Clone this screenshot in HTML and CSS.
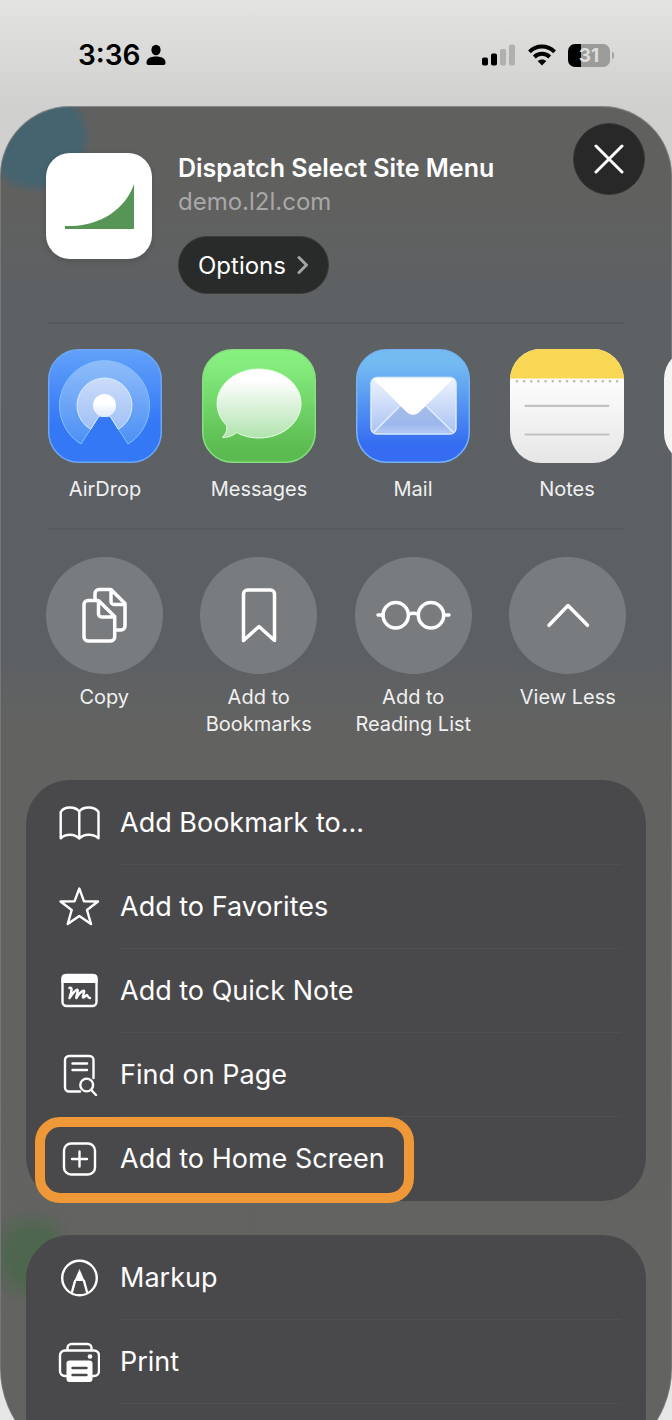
FILE: index.html
```html
<!DOCTYPE html>
<html lang="en">
<head>
    <meta charset="UTF-8">
    <meta name="viewport" content="width=device-width, initial-scale=1.0">
    <title>Dispatch Select Site Menu</title>
    <link rel="stylesheet" href="styles.css">
</head>
<body>
    <header class="status-bar">
        <span class="time">3:36</span>
        <svg class="person" width="20" height="22" viewBox="0 0 20 22">
            <ellipse cx="10" cy="6" rx="4.600" ry="5.200"/>
            <path d="M0.500 18.500C0.500 14.500 4.500 12.500 10 12.500S19.500 14.500 19.500 18.500C19.500 20.300 18.800 21 17.500 21H2.500C1.200 21 0.500 20.300 0.500 18.500Z"/>
        </svg>
        <svg class="signal" width="34" height="22" viewBox="0 0 34 22">
            <rect x="0" y="13.500" width="6" height="8" rx="1.800"/>
            <rect x="9" y="9.500" width="6" height="12" rx="1.800"/>
            <rect class="dim" x="18" y="5" width="6" height="16.500" rx="1.800"/>
            <rect class="dim" x="27" y="0.500" width="6" height="21" rx="1.800"/>
        </svg>
        <svg class="wifi" width="30" height="22" viewBox="0 0 30 22">
            <path class="wave" d="M2.500 7.800C9.500 0.800 20.500 0.800 27.500 7.800"/>
            <path class="wave" d="M7.300 13C11.600 8.800 18.400 8.800 22.700 13"/>
            <path d="M15 21.500L10.600 17C13 14.900 17 14.900 19.400 17Z"/>
        </svg>
        <div class="battery"><span class="battery-level">31</span></div>
    </header>

    <main class="sheet">
        <div class="page-info">
            <svg class="site-icon" width="106" height="106" viewBox="0 0 106 106">
                <path d="M19 73H26C54 72 79 57 88 31V76H19Z"/>
            </svg>
            <div class="page-text">
                <h1>Dispatch Select Site Menu</h1>
                <p>demo.l2l.com</p>
                <button class="options" type="button">Options
                    <svg width="12" height="20" viewBox="0 0 12 20"><path d="M2 2.500L9.500 10L2 17.500"/></svg>
                </button>
            </div>
            <button class="close" type="button" aria-label="Close">
                <svg width="30" height="30" viewBox="0 0 30 30"><path d="M2 2L28 28M28 2L2 28"/></svg>
            </button>
        </div>

        <hr>

        <div class="apps">
            <button class="app" type="button">
                <svg width="114" height="114" viewBox="0 0 114 114">
                    <defs>
                        <linearGradient id="airdrop" x2="0" y2="1"><stop offset="0" stop-color="#62a1fa"/><stop offset=".65" stop-color="#3478f6"/><stop offset="1" stop-color="#3478f6"/></linearGradient>
                        <linearGradient id="wave-outer" x2="0" y2="1"><stop offset="0" stop-color="#8fbdf9"/><stop offset="1" stop-color="#4c8ff5"/></linearGradient>
                        <linearGradient id="wave-inner" x2="0" y2="1"><stop offset="0" stop-color="#ccdcfa"/><stop offset="1" stop-color="#9fc0f6"/></linearGradient>
                        <linearGradient id="wave-dot" x2="0" y2="1"><stop offset=".4" stop-color="#fff"/><stop offset="1" stop-color="#dce8fd"/></linearGradient>
                    </defs>
                    <rect x=".75" y=".75" width="112.500" height="112.500" rx="30" fill="url(#airdrop)" stroke="#6ba6f9" stroke-width="1.500"/>
                    <path d="M33 95A45 45 0 1 1 80 95L62 67H51Z" fill="url(#wave-outer)" stroke="#86c0fb" stroke-linejoin="round"/>
                    <path d="M42.700 80.300A27.500 27.500 0 1 1 70.300 80.300L62 67H51Z" fill="url(#wave-inner)" stroke="#d5edff" stroke-linejoin="round"/>
                    <circle cx="56.500" cy="56.500" r="11.500" fill="url(#wave-dot)"/>
                </svg>
                <span>AirDrop</span>
            </button>
            <button class="app" type="button">
                <svg width="114" height="114" viewBox="0 0 114 114">
                    <defs>
                        <linearGradient id="messages" x2="0" y2="1"><stop offset="0" stop-color="#87f180"/><stop offset=".15" stop-color="#84eb7d"/><stop offset=".9" stop-color="#5bba50"/></linearGradient>
                        <linearGradient id="bubble" x2="0" y2="1"><stop offset=".15" stop-color="#fff"/><stop offset="1" stop-color="#b1e3ae"/></linearGradient>
                    </defs>
                    <rect x=".75" y=".75" width="112.500" height="112.500" rx="30" fill="url(#messages)" stroke="#86e080" stroke-width="1.500"/>
                    <path d="M34.500 83.600A42 34.500 0 1 0 24.500 76.300C25.500 81 24 85 20.500 88C20 89.200 29 88.500 34.500 83.600Z" fill="url(#bubble)" stroke="#e6ffe4"/>
                </svg>
                <span>Messages</span>
            </button>
            <button class="app" type="button">
                <svg width="114" height="114" viewBox="0 0 114 114">
                    <defs>
                        <linearGradient id="mail" x2="0" y2="1"><stop offset=".12" stop-color="#74bbf2"/><stop offset=".85" stop-color="#356cf1"/></linearGradient>
                        <linearGradient id="envelope" x2="0" y2="1"><stop offset="0" stop-color="#eef4fe"/><stop offset="1" stop-color="#a9c2f2"/></linearGradient>
                        <linearGradient id="envelope-front" x2="0" y2="1"><stop offset="0" stop-color="#a5bdea"/><stop offset=".7" stop-color="#9cb7ec"/><stop offset="1" stop-color="#b3c8f3"/></linearGradient>
                    </defs>
                    <rect x=".75" y=".75" width="112.500" height="112.500" rx="30" fill="url(#mail)" stroke="#75b3f6" stroke-width="1.500"/>
                    <rect x="15" y="28.500" width="85" height="56.500" rx="6" fill="url(#envelope)"/>
                    <path d="M18 83L43 58H71L97 83Z" fill="url(#envelope-front)"/>
                    <path d="M18 83L43 58M97 83L71 58" fill="none" stroke="#e2efff" stroke-width="1.500"/>
                    <path d="M17.500 30Q19 29 21 29H94Q96 29 97 30L64 62.500Q57 69.500 50 62.500Z" fill="#fff"/>
                    <rect x="15" y="28.500" width="85" height="56.500" rx="6" fill="none" stroke="#dcebff" stroke-width="1.500"/>
                </svg>
                <span>Mail</span>
            </button>
            <button class="app" type="button">
                <svg width="114" height="114" viewBox="0 0 114 114">
                    <defs>
                        <linearGradient id="notes" x2="0" y2="1"><stop offset=".3" stop-color="#fcfcfc"/><stop offset="1" stop-color="#e6e6e6"/></linearGradient>
                        <clipPath id="tile"><rect width="114" height="114" rx="31"/></clipPath>
                    </defs>
                    <g clip-path="url(#tile)">
                        <rect width="114" height="114" fill="url(#notes)"/>
                        <rect width="114" height="29.500" fill="#f7d753"/>
                    </g>
                    <path d="M7 32.300H108" stroke="#b9b8b2" stroke-width="2.600" stroke-linecap="round" stroke-dasharray="0 7.150"/>
                    <path d="M15.500 56.800H98.500M15.500 85.500H98.500" stroke="#c1c1c1" stroke-width="2.200" stroke-linecap="round"/>
                </svg>
                <span>Notes</span>
            </button>
            <div class="app" aria-hidden="true"><div class="blank-tile"></div></div>
        </div>

        <hr>

        <div class="actions">
            <button class="action" type="button">
                <svg width="117" height="117" viewBox="0 0 117 117">
                    <path d="M52.500 43.500H42A4 4 0 0 0 38 47.500V80A4 4 0 0 0 42 84H64.700A4 4 0 0 0 68.700 80V59.500ZM52.500 43.500V57A3 3 0 0 0 55.500 60H68.500"/>
                    <path d="M49 43V36.500A4 4 0 0 1 53 32.500H65L79 46.500V69A4 4 0 0 1 75 73H70M65 32.500V44.500A3 3 0 0 0 68 47.500H79"/>
                </svg>
                <span>Copy</span>
            </button>
            <button class="action" type="button">
                <svg width="117" height="117" viewBox="0 0 117 117">
                    <path d="M43.500 83.500V37A4 4 0 0 1 47.500 33H70.500A4 4 0 0 1 74.500 37V83.500L59 69.500Z"/>
                </svg>
                <span>Add to<br>Bookmarks</span>
            </button>
            <button class="action" type="button">
                <svg width="117" height="117" viewBox="0 0 117 117">
                    <circle cx="40.700" cy="58.300" r="12.700"/>
                    <circle cx="76" cy="58.300" r="12.700"/>
                    <path d="M23 58H28M89 58H94M53.500 57.500Q58.300 55 63.200 57.500"/>
                </svg>
                <span>Add to<br>Reading List</span>
            </button>
            <button class="action" type="button">
                <svg width="117" height="117" viewBox="0 0 117 117">
                    <path d="M40 68.300L59 48.500L78.500 68.300"/>
                </svg>
                <span>View Less</span>
            </button>
        </div>

        <ul class="menu">
            <li><button type="button">
                <svg width="42" height="42" viewBox="0 0 42 42"><path d="M21.300 9.500C19 6.500 15.500 5.500 12 5.500C8 5.500 4.500 7 2.700 10V36.300C5.500 33.500 8.500 32.700 12 32.700C15.500 32.700 18.500 33.800 21.300 36.500C24 33.800 27 32.700 30.600 32.700C34 32.700 37.500 33.500 40.500 36.300V10C38.500 7 34.500 5.500 30.600 5.500C27 5.500 23.500 6.500 21.300 9.500V36.500"/></svg>
                <span>Add Bookmark to...</span>
            </button></li>
            <li><button type="button">
                <svg width="42" height="42" viewBox="0 0 42 42"><path d="M21.300 2.500L26 15.300L40 15.500L29 24L33 38L21.300 30L9.700 38L13.700 24L2.500 15.500L16.500 15.300Z"/></svg>
                <span>Add to Favorites</span>
            </button></li>
            <li><button type="button">
                <svg width="42" height="42" viewBox="0 0 42 42"><rect x="4.500" y="5" width="34" height="31" rx="4"/><path class="solid" d="M3.500 13V8A4 4 0 0 1 7.500 4H35.500A4 4 0 0 1 39.500 8V13Z"/><path d="M11.500 18C14.500 17 14 20 11.500 28C14.500 23.500 17.500 19.500 19.500 19.800C20.800 20.300 18.300 24.500 18.300 28C20.800 24 24 20.500 26 20.800C27 21.300 24.500 25 25 27.300C26.500 28.500 27.500 25 29 25C30 25.500 29.500 28 32 28"/></svg>
                <span>Add to Quick Note</span>
            </button></li>
            <li><button type="button">
                <svg width="42" height="42" viewBox="0 0 42 42"><path d="M22 37.500H11A4 4 0 0 1 7 33.500V6A4 4 0 0 1 11 2H31.500A4 4 0 0 1 35.500 6V24M14.500 9.500H29M14.500 16H29M33.300 36L38 41"/><circle cx="28.700" cy="31" r="6.400"/></svg>
                <span>Find on Page</span>
            </button></li>
            <li class="highlight"><button type="button">
                <svg width="42" height="42" viewBox="0 0 42 42"><rect x="6" y="5.500" width="31" height="31" rx="7"/><path d="M21.500 13.500V28.500M14 21H29"/></svg>
                <span>Add to Home Screen</span>
            </button></li>
        </ul>

        <ul class="menu more">
            <li><button type="button">
                <svg width="42" height="42" viewBox="0 0 42 42"><circle cx="21.500" cy="21" r="17.300"/><path d="M17 24L14 35M26 24L29 35"/><path class="solid" d="M21.500 12L26.700 24H16.300Z"/></svg>
                <span>Markup</span>
            </button></li>
            <li><button type="button">
                <svg width="42" height="42" viewBox="0 0 42 42"><path d="M9.500 9.500V7A4 4 0 0 1 13.500 3H29.500A4 4 0 0 1 33.500 7V9.500M9 35H7A5 5 0 0 1 2 30V14.500A5 5 0 0 1 7 9.500H36A5 5 0 0 1 41 14.500V30A5 5 0 0 1 36 35H34"/><rect class="solid" x="8.500" y="19.500" width="26" height="21.500" rx="3"/><path class="cut" d="M14.500 27H28.500M14.500 34H28.500"/><circle class="solid" cx="32" cy="15.500" r="2.300"/></svg>
                <span>Print</span>
            </button></li>
        </ul>
    </main>
</body>
</html>
```
FILE: styles.css
```css
*,
*::after {
    box-sizing: border-box;
}
body {
    display: flex;
    flex-direction: column;
    height: 100vh;
    margin: 0;
    overflow: hidden;
    font-family: Inter, -apple-system, 'Liberation Sans', sans-serif;
    color: #fff;
    background: linear-gradient(#e3e3e2 0, #d0d0cf 106px, #cfcfce 300px, #e6e6e6 600px);
}
button {
    padding: 0;
    border: 0;
    background: none;
    color: inherit;
    font: inherit;
    cursor: pointer;
}
svg {
    flex: none;
    display: block;
}

/* status bar */
.status-bar {
    display: flex;
    flex: none;
    align-items: center;
    height: 106px;
    padding: 4px 58px 0 78px;
    color: #000;
}
.time {
    font-size: 28px;
    font-weight: 600;
}
.person {
    margin-left: 6px;
}
.signal {
    margin-left: auto;
}
.signal .dim {
    fill: #b0b0af;
}
.wifi {
    margin: 0 11px;
}
.wave {
    fill: none;
    stroke: #000;
    stroke-width: 4;
}
.battery {
    position: relative;
    width: 42px;
    margin-right: 4px;
    border-radius: 7px;
    background: linear-gradient(90deg, #000 13px, #9b9b9a 13px);
    text-align: center;
}
.battery::after {
    content: '';
    position: absolute;
    top: 8px;
    right: -4px;
    width: 2px;
    height: 7px;
    border-radius: 0 2px 2px 0;
    background: #a5a5a4;
}
.battery-level {
    display: block;
    color: #dededd;
    font-size: 19px;
    font-weight: 700;
    line-height: 23px;
}

/* share sheet */
.sheet {
    display: flex;
    flex: 1;
    flex-direction: column;
    min-height: 0;
    margin-bottom: -48px;
    overflow: hidden;
    border-radius: 70px 70px 100px 100px;
    box-shadow: inset 0 1px 1px #8a8a8a, inset 1px 0 0 #757575, inset -1px 0 0 #757575;
    background:
        radial-gradient(circle at 36px 32px, #456470 44px, rgba(69, 100, 112, 0) 56px),
        radial-gradient(ellipse 46px 50px at 32px 1150px, #4f664e 50%, rgba(79, 102, 78, 0)),
        linear-gradient(#60605f 0, #60605f 100px, #5d6164 200px, #5c6064 540px, #626261 620px, #636362 100%);
}
.page-info {
    display: flex;
    flex: none;
    align-items: flex-start;
    padding: 17px 27px 28px 46px;
}
.site-icon {
    margin-top: 30px;
    border-radius: 24px;
    background: #fff;
    box-shadow: 0 2px 6px rgba(0, 0, 0, 0.15);
    fill: #579557;
}
.page-text {
    flex: 1;
    margin: 28px 0 0 26px;
}
h1,
.page-text p {
    margin: 0;
    line-height: 34px;
}
h1 {
    font-size: 25px;
    font-weight: 600;
}
.page-text p {
    color: #a8a8a8;
    font-size: 24px;
}
.options {
    display: flex;
    align-items: center;
    gap: 11px;
    height: 58px;
    margin-top: 17px;
    padding: 0 19px;
    border: 1px solid #3b3c3c;
    border-radius: 29px;
    background: #292a2a;
    font-size: 24px;
}
.options svg {
    fill: none;
    stroke: #a4a4a4;
    stroke-width: 3;
    stroke-linecap: round;
    stroke-linejoin: round;
}
.close {
    display: flex;
    align-items: center;
    justify-content: center;
    width: 72px;
    height: 72px;
    border: 1px solid #373737;
    border-radius: 50%;
    background: #282828;
    stroke: #fff;
    stroke-width: 3;
    stroke-linecap: round;
}
hr {
    flex: none;
    width: calc(100% - 94px);
    height: 2px;
    margin: 0 auto;
    border: 0;
    background: #575a5c;
}

/* app and action rows */
.apps {
    display: grid;
    flex: none;
    grid-auto-columns: 154px;
    grid-auto-flow: column;
    padding: 25px 0 25px 28px;
    overflow: hidden;
}
.app,
.action {
    display: flex;
    flex-direction: column;
    align-items: center;
    color: #f0f0f0;
    font-size: 20px;
    line-height: 27px;
}
.app {
    gap: 13px;
}
.blank-tile {
    width: 114px;
    height: 114px;
    border-radius: 30px;
    background: #f4f4f4;
}
.actions {
    display: grid;
    flex: none;
    grid-template-columns: repeat(4, 1fr);
    padding: 27px 27px 42px;
}
.action {
    gap: 10px;
}
.action svg {
    border-radius: 50%;
    background: #797c7f;
    fill: none;
    stroke: #fff;
    stroke-width: 3.5;
    stroke-linecap: round;
    stroke-linejoin: round;
}

/* menus */
.menu {
    flex: none;
    margin: 0 26px 34px;
    padding: 1px 0;
    border-radius: 44px;
    background: #49494b;
    list-style: none;
}
.menu li {
    position: relative;
}
.menu li + li,
.more li:last-child {
    border-image: linear-gradient(90deg, transparent 94px, #505051 94px, #505051 calc(100% - 26px), transparent calc(100% - 26px)) 1;
}
.menu li + li {
    border-top: 1px solid;
}
.more li:last-child {
    border-bottom: 1px solid;
}
.menu button {
    display: flex;
    align-items: center;
    gap: 20px;
    width: 100%;
    height: 83px;
    padding-left: 32px;
    font-size: 27px;
}
.menu svg {
    fill: none;
    stroke: #fff;
    stroke-width: 2.4;
    stroke-linecap: round;
    stroke-linejoin: round;
}
.menu .solid {
    fill: #fff;
    stroke: none;
}
.menu .cut {
    stroke: #49494b;
}
.more {
    flex: 1;
    margin-bottom: 0;
    border-radius: 44px 44px 0 0;
}
.highlight::after {
    content: '';
    position: absolute;
    top: 0;
    left: 9px;
    width: 379px;
    height: 86px;
    border: 10px solid #ef9837;
    border-radius: 25px;
    pointer-events: none;
}
```
